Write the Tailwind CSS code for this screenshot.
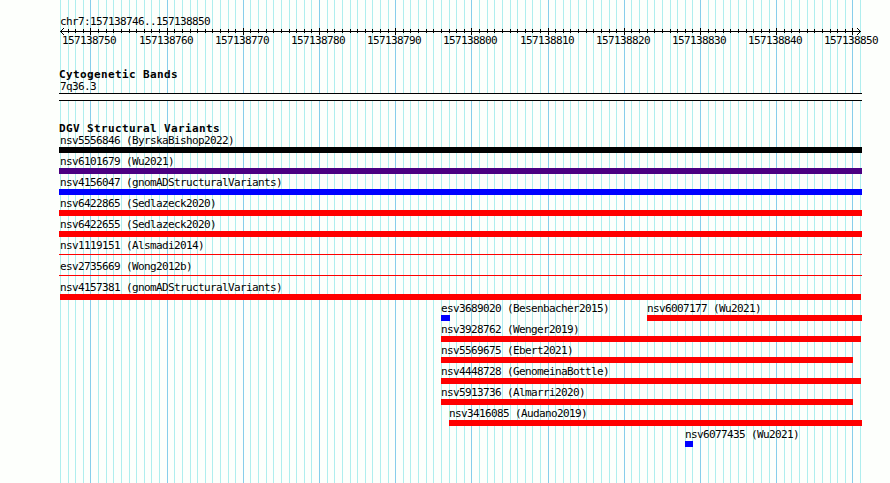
<!DOCTYPE html>
<html lang="en">

<head>
    <meta charset="UTF-8">
    <meta name="viewport" content="width=device-width, initial-scale=1.0">
    <title>chr7:157138746..157138850</title>
    <script src="https://cdn.jsdelivr.net/npm/@tailwindcss/browser@4"></script>
</head>

<body class="bg-[#fdfffc] text-black">
    <div class="relative w-[890px] h-[483px] overflow-hidden font-['DejaVu_Sans_Mono',monospace] text-[11px] leading-[12px] tracking-[-0.622px] whitespace-nowrap">
        <!-- grid lines behind the tracks -->
        <svg id="grid" class="absolute inset-0" width="890" height="483" shape-rendering="crispEdges"></svg>

        <main class="relative pt-4">
            <!-- scale -->
            <p class="pl-[60px]">chr7:157138746..157138850</p>
            <svg id="ruler" class="block" width="890" height="7" viewBox="0 1 890 7" shape-rendering="crispEdges"></svg>
            <div id="labels" class="relative h-[12px]"></div>

            <h2 class="mt-[22px] pl-[59px] font-bold tracking-[0.378px]">Cytogenetic Bands</h2>
            <p class="pl-[60px]">7q36.3</p>
            <div class="ml-[59px] w-[803px] h-[8px] border-y border-black bg-[#fdfffc]"></div>

            <h2 class="mt-[22px] pl-[59px] font-bold tracking-[0.378px]">DGV Structural Variants</h2>
            <div id="variants"></div>
        </main>
    </div>

    <script>
        const START = 157138746;
        const SCALE = 800 / 105;
        const xOf = (pos) => Math.round(60 + (pos - START) * SCALE);

        // each row: [name, left, right, colour, thickness]
        const rows = [
            [['nsv5556846 (ByrskaBishop2022)', 59, 862, '#000000', 6]],
            [['nsv6101679 (Wu2021)', 59, 862, '#4b0082', 6]],
            [['nsv4156047 (gnomADStructuralVariants)', 59, 862, '#0000ff', 6]],
            [['nsv6422865 (Sedlazeck2020)', 59, 862, '#ff0000', 6]],
            [['nsv6422655 (Sedlazeck2020)', 59, 862, '#ff0000', 6]],
            [['nsv1119151 (Alsmadi2014)', 59, 862, '#ff0000', 1]],
            [['esv2735669 (Wong2012b)', 59, 862, '#ff0000', 1]],
            [['nsv4157381 (gnomADStructuralVariants)', 60, 861, '#ff0000', 6]],
            [['esv3689020 (Besenbacher2015)', 441, 450, '#0000ff', 6], ['nsv6007177 (Wu2021)', 647, 862, '#ff0000', 6]],
            [['nsv3928762 (Wenger2019)', 441, 861, '#ff0000', 6]],
            [['nsv5569675 (Ebert2021)', 441, 853, '#ff0000', 6]],
            [['nsv4448728 (GenomeinaBottle)', 441, 861, '#ff0000', 6]],
            [['nsv5913736 (Almarri2020)', 441, 853, '#ff0000', 6]],
            [['nsv3416085 (Audano2019)', 449, 862, '#ff0000', 6]],
            [['nsv6077435 (Wu2021)', 685, 693, '#0000ff', 6]],
        ];

        let grid = '';
        let ticks = '<rect x="60" y="4" width="801" height="1"/>';
        let labels = '';
        for (let pos = START; pos <= START + 105; pos++) {
            const x = xOf(pos);
            const major = pos % 10 === 0;
            grid += `<rect x="${x}" y="0" width="1" height="483" fill="${major ? '#87ceeb' : '#afeeee'}"/>`;
            if (pos > START && pos < START + 105) {
                ticks += `<rect x="${x}" y="${major ? 1 : 2}" width="1" height="${major ? 7 : 4}"/>`;
            }
            if (major) {
                labels += `<span class="absolute top-0" style="left:${x - 28}px">${pos}</span>`;
            }
        }
        // arrow heads
        for (let i = 1; i < 4; i++) {
            ticks += `<rect x="${60 + i}" y="${4 - i}" width="1" height="1"/><rect x="${60 + i}" y="${4 + i}" width="1" height="1"/>`;
            ticks += `<rect x="${860 - i}" y="${4 - i}" width="1" height="1"/><rect x="${860 - i}" y="${4 + i}" width="1" height="1"/>`;
        }
        document.getElementById('grid').innerHTML = grid;
        document.getElementById('ruler').innerHTML = ticks;
        document.getElementById('labels').innerHTML = labels;

        document.getElementById('variants').innerHTML = rows.map(row => {
            let edge = 0;
            return `<div class="flex h-[21px]">${row.map(([name, left, right, color, size]) => {
                const gap = left - edge;
                edge = right;
                return `
                <div class="shrink-0" style="margin-left:${gap}px;width:${right - left}px">
                    <p style="padding-left:${left === 59 ? 1 : 0}px">${name}</p>
                    <div style="margin-top:${size === 1 ? 2 : 0}px;height:${size}px;background:${color}"></div>
                </div>`;
            }).join('')}</div>`;
        }).join('');
    </script>
</body>

</html>
